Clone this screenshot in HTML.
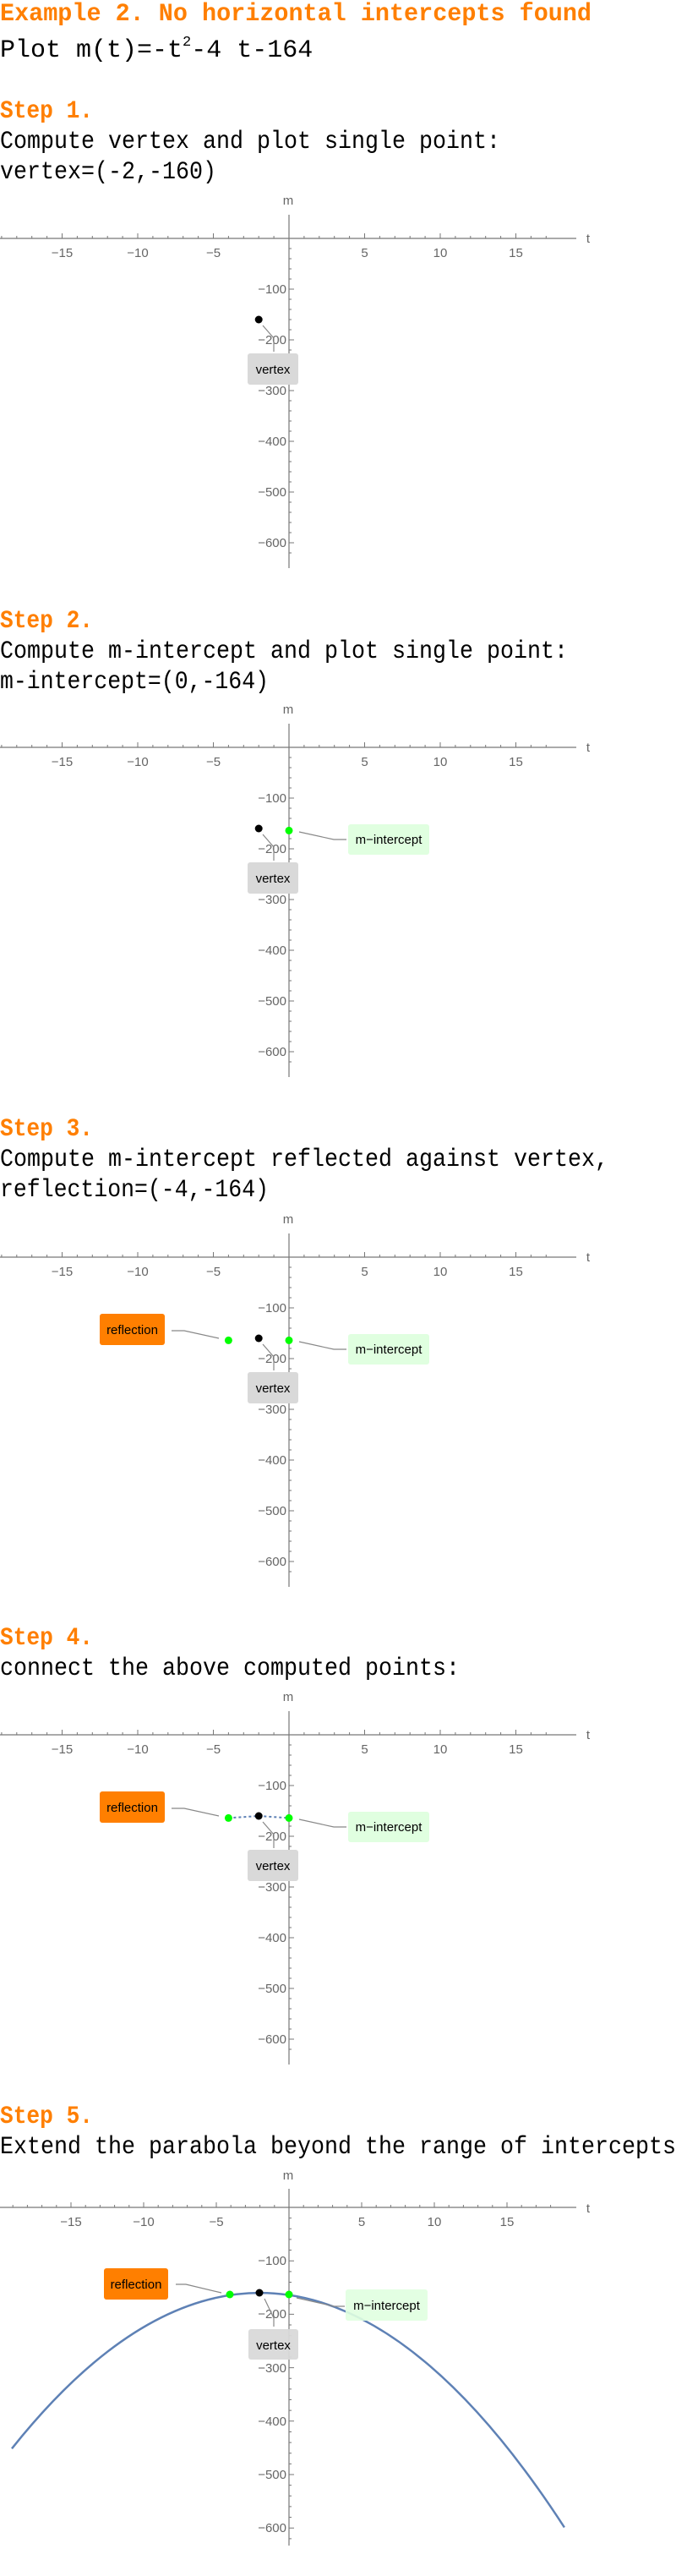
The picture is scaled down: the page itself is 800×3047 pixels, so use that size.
<!DOCTYPE html>
<html><head><meta charset="utf-8"><style>
html,body{margin:0;padding:0;background:#fff;width:800px;height:3047px;overflow:hidden}
svg{display:block}
.h{font-family:"Liberation Mono",monospace;font-weight:bold;font-size:30px;fill:#ff7f00}
.t{font-family:"Liberation Mono",monospace;font-size:30px;fill:#000}
.tl{font-family:"Liberation Sans",sans-serif;font-size:15px;fill:#666}
.lb{font-family:"Liberation Sans",sans-serif;font-size:15px;fill:#000}
</style></head><body>
<svg width="800" height="3047" viewBox="0 0 800 3047" xmlns="http://www.w3.org/2000/svg">
<defs>
<g id="axA">
<path d="M0,0H682M342,-28V390" stroke="#777" stroke-width="1.2" fill="none"/>
<path d="M1.9,0v-3m17.9,3v-3m17.9,3v-3m17.9,3v-3m17.9,3v-3m17.9,3v-3m17.9,3v-3m17.9,3v-3m17.9,3v-3m17.9,3v-3m17.9,3v-3m17.9,3v-3m17.9,3v-3m17.9,3v-3m17.9,3v-3m17.9,3v-3m17.9,3v-3m17.9,3v-3m17.9,3v-3m17.9,3v-3m17.9,3v-3m17.9,3v-3m17.9,3v-3m17.9,3v-3m17.9,3v-3m17.9,3v-3m17.9,3v-3m17.9,3v-3m17.9,3v-3m17.9,3v-3m17.9,3v-3m17.9,3v-3m17.9,3v-3m17.9,3v-3m17.9,3v-3m17.9,3v-3m17.9,3v-3M73.5,0v-6M163,0v-6M252.5,0v-6M431.5,0v-6M521,0v-6M610.5,0v-6M342,12h3m-3,12h3m-3,12h3m-3,12h3m-3,12h3m-3,12h3m-3,12h3m-3,12h3m-3,12h3m-3,12h3m-3,12h3m-3,12h3m-3,12h3m-3,12h3m-3,12h3m-3,12h3m-3,12h3m-3,12h3m-3,12h3m-3,12h3m-3,12h3m-3,12h3m-3,12h3m-3,12h3m-3,12h3m-3,12h3m-3,12h3m-3,12h3m-3,12h3m-3,12h3m-3,12h3M342,60h6M342,120h6M342,180h6M342,240h6M342,300h6M342,360h6" stroke="#777" stroke-width="1" fill="none"/>
<g class="tl" text-anchor="middle">
<text x="73.5" y="22">−15</text><text x="163" y="22">−10</text><text x="252.5" y="22">−5</text><text x="431.5" y="22">5</text><text x="521" y="22">10</text><text x="610.5" y="22">15</text>
<text x="341" y="-40">m</text><text x="696" y="5">t</text>
</g>
<g class="tl" text-anchor="end">
<text x="339" y="65">−100</text><text x="339" y="125">−200</text><text x="339" y="185">−300</text><text x="339" y="245">−400</text><text x="339" y="305">−500</text><text x="339" y="365">−600</text>
</g>
</g>
<g id="vtx">
<path d="M311,103L324,118V134" stroke="#888" stroke-width="1.2" fill="none"/>
<rect x="293" y="136" width="60" height="37" rx="3" fill="#d9d9d9"/>
<text class="lb" x="323" y="160" text-anchor="middle">vertex</text>
<circle cx="306.2" cy="96" r="4.5" fill="#000"/>
</g>
<g id="mint">
<path d="M354,100L395,109H410" stroke="#888" stroke-width="1.2" fill="none"/>
<rect x="412" y="91" width="96" height="36" rx="3" fill="#e0ffe0"/>
<text class="lb" x="460" y="114" text-anchor="middle">m−intercept</text>
<circle cx="342" cy="98.4" r="4.5" fill="#00ff00"/>
</g>
<g id="refl">
<path d="M203,87H218L259,96" stroke="#888" stroke-width="1.2" fill="none"/>
<rect x="118" y="67" width="77" height="37" rx="3" fill="#ff7f00"/>
<text class="lb" x="156.5" y="91" text-anchor="middle">reflection</text>
<circle cx="270.4" cy="98.4" r="4.5" fill="#00ff00"/>
</g>
</defs>

<text class="h" x="0" y="24" font-size="31" textLength="700" lengthAdjust="spacingAndGlyphs">Example 2. No horizontal intercepts found</text>
<text class="t" x="0" y="67">Plot m(t)=-t<tspan font-size="17" dy="-13">2</tspan><tspan dy="13">-4 t-164</tspan></text>

<!-- Step 1 -->
<text class="h" x="0" y="139" textLength="110" lengthAdjust="spacingAndGlyphs">Step 1.</text>
<text class="t" x="0" y="175" textLength="592" lengthAdjust="spacingAndGlyphs">Compute vertex and plot single point:</text>
<text class="t" x="0" y="211" textLength="256" lengthAdjust="spacingAndGlyphs">vertex=(-2,-160)</text>
<g transform="translate(0,282)"><use href="#axA"/><use href="#vtx"/></g>

<!-- Step 2 -->
<text class="h" x="0" y="742" textLength="110" lengthAdjust="spacingAndGlyphs">Step 2.</text>
<text class="t" x="0" y="778" textLength="672" lengthAdjust="spacingAndGlyphs">Compute m-intercept and plot single point:</text>
<text class="t" x="0" y="814" textLength="318" lengthAdjust="spacingAndGlyphs">m-intercept=(0,-164)</text>
<g transform="translate(0,884)"><use href="#axA"/><use href="#vtx"/><use href="#mint"/></g>

<!-- Step 3 -->
<text class="h" x="0" y="1343" textLength="110" lengthAdjust="spacingAndGlyphs">Step 3.</text>
<text class="t" x="0" y="1379" textLength="720" lengthAdjust="spacingAndGlyphs">Compute m-intercept reflected against vertex,</text>
<text class="t" x="0" y="1415" textLength="318" lengthAdjust="spacingAndGlyphs">reflection=(-4,-164)</text>
<g transform="translate(0,1487)"><use href="#axA"/><use href="#vtx"/><use href="#mint"/><use href="#refl"/></g>

<!-- Step 4 -->
<text class="h" x="0" y="1945" textLength="110" lengthAdjust="spacingAndGlyphs">Step 4.</text>
<text class="t" x="0" y="1981" textLength="544" lengthAdjust="spacingAndGlyphs">connect the above computed points:</text>
<g transform="translate(0,2052)"><use href="#axA"/>
<path d="M270.4,98.4L306.2,96L342,98.4" stroke="#5e81b5" stroke-width="2" stroke-dasharray="3,3" fill="none"/>
<use href="#vtx"/><use href="#mint"/><use href="#refl"/></g>

<!-- Step 5 -->
<text class="h" x="0" y="2511" textLength="110" lengthAdjust="spacingAndGlyphs">Step 5.</text>
<text class="t" x="0" y="2547" textLength="800" lengthAdjust="spacingAndGlyphs">Extend the parabola beyond the range of intercepts</text>
<g transform="translate(0,2611)">
<path d="M0,0H682M342,-22V400" stroke="#777" stroke-width="1.2" fill="none"/>
<path d="M15.2,0v-3m17.2,3v-3m17.2,3v-3m17.2,3v-3m17.2,3v-3m17.2,3v-3m17.2,3v-3m17.2,3v-3m17.2,3v-3m17.2,3v-3m17.2,3v-3m17.2,3v-3m17.2,3v-3m17.2,3v-3m17.2,3v-3m17.2,3v-3m17.2,3v-3m17.2,3v-3m17.2,3v-3m17.2,3v-3m17.2,3v-3m17.2,3v-3m17.2,3v-3m17.2,3v-3m17.2,3v-3m17.2,3v-3m17.2,3v-3m17.2,3v-3m17.2,3v-3m17.2,3v-3m17.2,3v-3m17.2,3v-3m17.2,3v-3m17.2,3v-3m17.2,3v-3m17.2,3v-3m17.2,3v-3m17.2,3v-3M84,0v-6M170,0v-6M256,0v-6M428,0v-6M514,0v-6M600,0v-6M342,12.64h3m-3,12.64h3m-3,12.64h3m-3,12.64h3m-3,12.64h3m-3,12.64h3m-3,12.64h3m-3,12.64h3m-3,12.64h3m-3,12.64h3m-3,12.64h3m-3,12.64h3m-3,12.64h3m-3,12.64h3m-3,12.64h3m-3,12.64h3m-3,12.64h3m-3,12.64h3m-3,12.64h3m-3,12.64h3m-3,12.64h3m-3,12.64h3m-3,12.64h3m-3,12.64h3m-3,12.64h3m-3,12.64h3m-3,12.64h3m-3,12.64h3m-3,12.64h3m-3,12.64h3m-3,12.64h3M342,63.2h6M342,126.4h6M342,189.6h6M342,252.8h6M342,316h6M342,379.2h6" stroke="#777" stroke-width="1" fill="none"/>
<g class="tl" text-anchor="middle">
<text x="84" y="22">−15</text><text x="170" y="22">−10</text><text x="256" y="22">−5</text><text x="428" y="22">5</text><text x="514" y="22">10</text><text x="600" y="22">15</text>
<text x="341" y="-33">m</text><text x="696" y="6">t</text>
</g>
<g class="tl" text-anchor="end">
<text x="339" y="68">−100</text><text x="339" y="131">−200</text><text x="339" y="195">−300</text><text x="339" y="258">−400</text><text x="339" y="321">−500</text><text x="339" y="384">−600</text>
</g>
</g>
<path d="M14,2896.3Q341,2486.1 667.9,2989.5" stroke="#5e81b5" stroke-width="2.5" fill="none"/>
<path d="M313,2719L324,2742V2752" stroke="#888" stroke-width="1.2" fill="none"/>
<rect x="294" y="2755" width="59" height="36" rx="3" fill="#d9d9d9" fill-opacity="0.95"/>
<text class="lb" x="323.5" y="2779" text-anchor="middle">vertex</text>
<path d="M351,2718L395,2728H408" stroke="#888" stroke-width="1.2" fill="none"/>
<rect x="409" y="2708" width="97" height="37" rx="3" fill="#e0ffe0" fill-opacity="0.9"/>
<text class="lb" x="457.5" y="2732" text-anchor="middle">m−intercept</text>
<path d="M208,2702H220L262,2712" stroke="#888" stroke-width="1.2" fill="none"/>
<rect x="123" y="2683" width="76" height="37" rx="3" fill="#ff7f00"/>
<text class="lb" x="161" y="2707" text-anchor="middle">reflection</text>
<circle cx="272" cy="2714" r="4.5" fill="#00ff00"/>
<circle cx="307" cy="2712" r="4.5" fill="#000"/>
<circle cx="342" cy="2714" r="4.5" fill="#00ff00"/>
</svg>
</body></html>
